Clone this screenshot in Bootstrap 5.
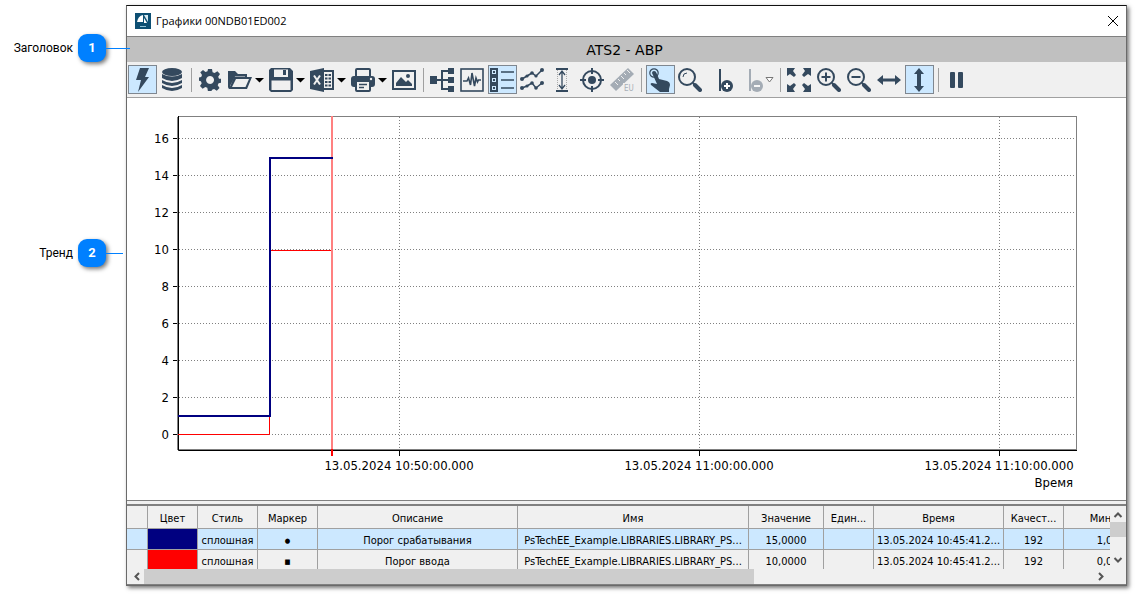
<!DOCTYPE html>
<html lang="ru">
<head>
<meta charset="utf-8">
<meta name="viewport" content="width=device-width, initial-scale=1">
<title>Графики 00NDB01ED002</title>
<link href="https://cdn.jsdelivr.net/npm/bootstrap@5.3.0/dist/css/bootstrap.min.css" rel="stylesheet">
<style>
body { font-family: "DejaVu Sans Condensed", "DejaVu Sans", sans-serif; font-size: 11px; line-height: 16px; color: #000; }
/* callouts */
.callouts { width: 130px; padding-top: 34px; z-index: 2; font-family: Roboto, sans-serif; font-size: 12px; }
.callout-label { width: 73px; }
.callout-num { width: 28px; height: 28px; margin-left: 5px; border-radius: 9px; background: #0080ff; box-shadow: 2px 2px 4px #777; font-size: 13px; }
.callout-line { height: 1px; width: 24px; background: #0080ff; }
.callout-line.short-line { width: 17px; }
.callout-second { margin-top: 177px; }
/* window */
.page-pad { padding: 5px 8px 9px 0; min-width: 0; }
.trend-window { margin-left: -4px; border: 1px solid #6a6a6a; border-top-color: #111; box-shadow: 2px 2px 4px #777; }
.title-bar { height: 31px; padding: 0 7px 0 8px; border-bottom: 1px solid #808080; font-family: "Open Sans", "Noto Sans", sans-serif; font-size: 11px; gap: 5px; }
.close-btn { width: 12px; height: 16px; }
.caption-bar { height: 25px; padding-right: 4px; background: #c0c0c0; font-family: "DejaVu Sans", sans-serif; font-size: 14px; line-height: 26px; }
.tool-bar { height: 36px; background: #f0f0f0; border-bottom: 1px solid #a0a0a0; }
.tool-bar svg { display: block; fill: #34495e; }
.tool { width: 29px; height: 29px; margin-left: 1px; padding: 1px; border: 1px solid transparent; border-radius: 0; background: none; flex: none; }
.tool.active { background: #cce8ff; border-color: #7f8790; }
.tool:disabled { opacity: .4; }
.drop { width: 11px; height: 29px; padding: 0; border: 0; background: none; flex: none; }
.drop svg { fill: #000; }
.sep { width: 8px; height: 24px; padding-left: 4px; flex: none; }
.sep::before { content: ""; display: block; width: 1px; height: 24px; background: #a0a0a0; }
.ln { fill: none; stroke: #34495e; }
/* chart */
.chart { font-size: 13px; }
.grid-lines { stroke: #808080; stroke-dasharray: 1 2; }
/* table */
.splitter { height: 6px; background: #f0f0f0; border-top: 1px solid #808080; border-bottom: 2px solid #808080; }
.table-area { background: #f0f0f0; height: 63px; }
.tags { width: 1038px; table-layout: fixed; border-collapse: separate; border-spacing: 0; }
.tags th, .tags td { height: 21px; padding: 3px 0 0; border-right: 1px solid #a0a0a0; border-bottom: 1px solid #a0a0a0; font-weight: 400; text-align: center; white-space: nowrap; overflow: hidden; line-height: 16px; }
.tags th { height: 23px; }
.tags .picked td { background: #cce8ff; }
.tags td.navy-cell { background: #000080; }
.tags td.red-cell { background: #f00; }
.tags td.marker-cell { font-size: 7px; }
.scroll-v { width: 16px; }
.scroll-h { height: 16px; background: #f0f0f0; padding-right: 17px; border-bottom: 1px solid #808080; }
.scroll-btn { width: 16px; height: 16px; padding: 0; border: 0; background: none; flex: none; }
.scroll-btn svg { display: block; fill: none; stroke: #555; stroke-width: 2; }
.thumb-v { height: 15px; background: #cdcdcd; }
.thumb-h { background: #cdcdcd; margin-left: 1px; }
</style>
</head>
<body class="bg-white">
<div class="d-flex align-items-start">
  <aside class="callouts flex-shrink-0 position-relative">
    <div class="d-flex align-items-center">
      <span class="callout-label text-end">Заголовок</span>
      <span class="callout-num d-flex align-items-center justify-content-center text-white fw-bold">1</span>
      <span class="callout-line"></span>
    </div>
    <div class="callout-second d-flex align-items-center">
      <span class="callout-label text-end">Тренд</span>
      <span class="callout-num d-flex align-items-center justify-content-center text-white fw-bold">2</span>
      <span class="callout-line short-line"></span>
    </div>
  </aside>

  <div class="page-pad flex-grow-1">
  <main class="trend-window bg-white">
    <header class="title-bar d-flex align-items-center">
      <svg width="16" height="16" viewBox="0 0 16 16"><rect width="16" height="16" fill="#0d4f73"/><path d="M2 9Q3 3 8 2V9Z" fill="#fff"/><path d="M9 2h4v8H9z" fill="#d8eaf2"/><path d="M9 2l4 7v1H9z" fill="#0d4f73"/><path d="M9 5l3 5H9z" fill="#fff"/><path d="M5 13h6v1H5z" fill="#8fc3d8"/></svg>
      <span>Графики 00NDB01ED002</span>
      <button class="close-btn btn p-0 border-0 ms-auto d-flex align-items-center" aria-label="Закрыть"><svg width="12" height="12" viewBox="0 0 12 12"><path d="M1 1l10 10M11 1L1 11" stroke="#000"/></svg></button>
    </header>
    <div class="caption-bar text-center">ATS2 - АВР</div>

    <div class="tool-bar d-flex align-items-center overflow-hidden" role="toolbar">
      <button class="tool active" aria-label="Онлайн"><svg width="24" height="24" viewBox="0 0 24 24"><path d="M10 0h9l-4 9h4L8 24l3-12H6z"/></svg></button>
      <button class="tool" aria-label="История"><svg width="24" height="24" viewBox="0 0 24 24"><ellipse cx="12" cy="4" rx="10" ry="4"/><path d="M2 6q10 5 20 0v4q-10 6-20 0zM2 12q10 6 20 0v3q-10 6-20 0zM2 17q10 6 20 0v3q-10 6-20 0z"/></svg></button>
      <span class="sep"></span>
      <button class="tool" aria-label="Настройки"><svg width="24" height="24" viewBox="0 0 24 24"><path fill-rule="evenodd" d="M10 1h4l.6 3.200 2 .9L19.400 3.300l2.600 2.700-1.800 2.800.8 2H23v4l-2.400.4-.9 2 1.800 2.800-2.700 2.700-2.700-1.800-2 .8L13.500 23h-3.600l-.6-3.300-2-.8-2.700 1.800L2 18l1.700-2.800-.8-2L1 12.800V9.500l2.200-.6.8-2L2.300 4.200 5 2l2.500 2 2-.8zM12 8a4 4 0 1 0 .1 0z"/></svg></button>
      <button class="tool" aria-label="Открыть"><svg width="24" height="24" viewBox="0 0 24 24"><path d="M0 3h7l3 3h9v4h-2V8.500H7L2 18l2 3H2q-2 0-2-2z"/><path fill-rule="evenodd" d="M6 9h18l-5 12H1zM8 11l-4 8h13.500l3.500-8z"/></svg></button>
      <button class="drop" aria-label="Открыть: варианты"><svg width="11" height="6" viewBox="0 0 11 6"><path d="M0 1h9L4.500 5.500z"/></svg></button>
      <button class="tool" aria-label="Сохранить"><svg width="24" height="24" viewBox="0 0 24 24"><path fill-rule="evenodd" d="M2 0h19l3 3v19l-2 2H2l-2-2V2zM5 1.500V9h14V1.500zM2.500 12.500v9.500h19v-9.500z"/><path d="M14 2h3v5h-3z"/></svg></button>
      <button class="drop" aria-label="Сохранить: варианты"><svg width="11" height="6" viewBox="0 0 11 6"><path d="M0 1h9L4.500 5.500z"/></svg></button>
      <button class="tool" aria-label="Экспорт в Excel"><svg width="24" height="24" viewBox="0 0 24 24"><path d="M0 3l14-3v24L0 21z"/><path d="M4 7.500l6 9M10 7.500l-6 9" stroke="#f0f0f0" stroke-width="2"/><path class="ln" d="M14 3h9v18h-9" stroke-width="2"/><path class="ln" d="M15 7h6M15 10.500h6M15 14h6M15 17.500h6" stroke-width="2" stroke-dasharray="2.500 1"/></svg></button>
      <button class="drop" aria-label="Экспорт: варианты"><svg width="11" height="6" viewBox="0 0 11 6"><path d="M0 1h9L4.500 5.500z"/></svg></button>
      <button class="tool" aria-label="Печать"><svg width="24" height="24" viewBox="0 0 24 24"><rect class="ln" x="5" y="1" width="14" height="9" rx="1" stroke-width="2"/><rect y="8" width="24" height="11" rx="3"/><rect x="5" y="13" width="14" height="10" rx="1" fill="#f0f0f0" stroke="#34495e" stroke-width="2"/><path class="ln" d="M8 16.500h8M8 19.500h5" stroke-width="1.500"/><circle cx="20" cy="11" r="1.200" fill="#f0f0f0"/></svg></button>
      <button class="drop" aria-label="Печать: варианты"><svg width="11" height="6" viewBox="0 0 11 6"><path d="M0 1h9L4.500 5.500z"/></svg></button>
      <button class="tool" aria-label="Изображение"><svg width="24" height="24" viewBox="0 0 24 24"><rect x="1" y="3" width="22" height="18" fill="none" stroke="#34495e" stroke-width="2"/><path d="M4 18v-3l5-6 5 5 2-2 4 4v2z"/><circle cx="16" cy="8" r="2"/></svg></button>
      <span class="sep"></span>
      <button class="tool" aria-label="Дерево"><svg width="24" height="24" viewBox="0 0 24 24"><path d="M0 8h7v8H0zM18 0h6v6h-6zM18 9h6v6h-6zM18 18h6v6h-6z"/><path class="ln" d="M6 12h12M18 3h-6v18h6" stroke-width="2"/></svg></button>
      <button class="tool" aria-label="Тренд"><svg width="24" height="24" viewBox="0 0 24 24"><rect class="ln" x="1" y="1" width="22" height="22" stroke-width="1.600"/><path class="ln" d="M3 13h4l1.500-3 2 7L12 5l2.500 13L16 10l1.500 4 1-2H21" stroke-width="1.600"/></svg></button>
      <button class="tool active" aria-label="Легенда"><svg width="24" height="24" viewBox="0 0 24 24"><path class="ln" d="M1 1h6v6H1zM1 9h6v6H1zM1 17h6v6H1z" stroke-width="2"/><path d="M3 3h2v2H3zM3 11h2v2H3zM3 19h2v2H3z"/><path class="ln" d="M11 4h13M11 12h13M11 20h13" stroke-width="1.500"/></svg></button>
      <button class="tool" aria-label="Графики"><svg width="24" height="24" viewBox="0 0 24 24"><path class="ln" d="M2 11l5-3 5-3 4 3 6-6M2 20l5-2 5-3 4 5 6-5" stroke-width="1.500"/><circle cx="2" cy="11" r="2"/><circle cx="7" cy="8" r="1.600"/><circle cx="12" cy="5" r="1.800"/><circle cx="16" cy="8" r="1.600"/><circle cx="22" cy="2" r="2"/><circle cx="2" cy="20" r="2"/><circle cx="7" cy="18" r="1.600"/><circle cx="12" cy="15" r="1.800"/><circle cx="16" cy="20" r="1.800"/><circle cx="22" cy="15" r="2"/></svg></button>
      <button class="tool" aria-label="Измерение по высоте"><svg width="24" height="24" viewBox="0 0 24 24"><path class="ln" d="M6 1h12M6 23h12" stroke-width="2"/><path d="M7.500 2v20M16.500 2v20" stroke="#aaa" stroke-dasharray="1 1"/><path class="ln" d="M12 4v16M9 7l3-4 3 4M9 17l3 4 3-4" stroke-width="1.300"/></svg></button>
      <button class="tool" aria-label="Центрировать"><svg width="24" height="24" viewBox="0 0 24 24"><circle class="ln" cx="12" cy="12" r="9" stroke-width="2"/><circle cx="12" cy="12" r="4"/><path class="ln" d="M12 0v6M12 18v6M0 12h6M18 12h6" stroke-width="2"/></svg></button>
      <button class="tool" aria-label="Единицы" disabled><svg width="24" height="24" viewBox="0 0 24 24"><path d="M0 17L18 0l6 6L6 23z"/><path d="M5 14l3 3M8 11l2 2M11 8l3 3M14 5l2 2M17 2l3 3" stroke="#f0f0f0"/><path d="M13 15h11v9H13z" fill="#f0f0f0"/><text x="14" y="23" font-size="8">EU</text></svg></button>
      <span class="sep"></span>
      <button class="tool active" aria-label="Выбор"><svg width="24" height="24" viewBox="0 0 24 24"><circle class="ln" cx="6" cy="5" r="4.200" stroke-width="1.200"/><path d="M4 5q0-2 2-2t2.500 2L11 11l8 2q3 1 3 4l-1 4v3h-9l-9-7q-1-2 1-2l5 1z"/></svg></button>
      <button class="tool" aria-label="Лупа"><svg width="24" height="24" viewBox="0 0 24 24"><circle class="ln" cx="9" cy="9" r="8" stroke-width="2"/><path class="ln" d="M5 9q0-4 4-4" stroke-width="1"/><path class="ln" d="M15 15l2 2" stroke-width="2"/><path class="ln" d="M17 17l5 5" stroke-width="4" stroke-linecap="round"/></svg></button>
      <button class="tool" aria-label="Добавить курсор"><svg width="24" height="24" viewBox="0 0 24 24" overflow="visible"><path d="M11 1h2v22h-2z"/><circle cx="19" cy="18" r="6"/><path d="M16 18h6M19 15v6" stroke="#fff" stroke-width="2"/></svg></button>
      <button class="tool" aria-label="Удалить курсор" disabled><svg width="24" height="24" viewBox="0 0 24 24" overflow="visible"><path d="M11 1h2v22h-2z"/><circle cx="19" cy="18" r="6"/><path d="M16 18h6" stroke="#fff" stroke-width="2"/></svg></button>
      <button class="drop" aria-label="Удалить: варианты"><svg width="11" height="6" viewBox="0 0 11 6"><path d="M1 .5h7L4.500 5z" fill="#fff" stroke="#777"/></svg></button>
      <span class="sep"></span>
      <button class="tool" aria-label="Показать всё"><svg width="24" height="24" viewBox="0 0 24 24"><path d="M0 0h8L6 3l3 4-2 2-4-3-3 2zM24 0v8l-3-2-4 3-2-2 3-4-2-3zM0 24v-8l3 2 4-3 2 2-3 4 2 3zM24 24h-8l2-3-3-4 2-2 4 3 3-2z"/></svg></button>
      <button class="tool" aria-label="Увеличить"><svg width="24" height="24" viewBox="0 0 24 24"><circle class="ln" cx="9" cy="9" r="8" stroke-width="2"/><path class="ln" d="M9 4.500v9M4.500 9h9" stroke-width="2"/><path class="ln" d="M15 15l2 2" stroke-width="2"/><path class="ln" d="M17 17l5 5" stroke-width="4" stroke-linecap="round"/></svg></button>
      <button class="tool" aria-label="Уменьшить"><svg width="24" height="24" viewBox="0 0 24 24"><circle class="ln" cx="9" cy="9" r="8" stroke-width="2"/><path class="ln" d="M4.500 9h9" stroke-width="2"/><path class="ln" d="M15 15l2 2" stroke-width="2"/><path class="ln" d="M17 17l5 5" stroke-width="4" stroke-linecap="round"/></svg></button>
      <button class="tool" aria-label="По ширине"><svg width="24" height="24" viewBox="0 0 24 24"><path d="M0 12l6-5v3.500h12V7l6 5-6 5v-3.500H6V17z"/></svg></button>
      <button class="tool active" aria-label="По высоте"><svg width="24" height="24" viewBox="0 0 24 24"><path d="M12 0l5 6h-3v12h3l-5 6-5-6h3V6H7z"/></svg></button>
      <span class="sep"></span>
      <button class="tool" aria-label="Пауза"><svg width="24" height="24" viewBox="0 0 24 24"><rect x="5" y="4" width="5" height="16" rx="1"/><rect x="13" y="4" width="5" height="16" rx="1"/></svg></button>
    </div>

    <svg class="chart d-block w-100" viewBox="0 0 999 402" role="img" aria-label="Тренд">
      <rect x="51.500" y="18.500" width="898" height="333" fill="none" stroke="#808080"/>
      <g class="grid-lines">
        <path d="M52 40.500h897M52 77.500h897M52 114.500h897M52 151.500h897M52 188.500h897M52 225.500h897M52 262.500h897M52 299.500h897M52 336.500h897"/>
        <path d="M272.500 19v332M572.500 19v332M872.500 19v332"/>
      </g>
      <path d="M51.500 18v334.500H950M46 40.500h5M46 77.500h5M46 114.500h5M46 151.500h5M46 188.500h5M46 225.500h5M46 262.500h5M46 299.500h5M46 336.500h5M272.500 353v5M572.500 353v5M872.500 353v5" fill="none" stroke="#000"/>
      <path d="M50 19h1v333h-1z" fill="#808080"/>
      <path d="M51 336.500h91.500V318M143 152.500h62" fill="none" stroke="#f00"/>
      <path d="M205 18v333" stroke="#ff8080" stroke-width="2"/>
      <path d="M205 351v7" stroke="#f00" stroke-width="2"/>
      <path d="M51 318h92V60h63" fill="none" stroke="#000080" stroke-width="2"/>
      <g text-anchor="end">
        <text x="42" y="45">16</text><text x="42" y="82">14</text><text x="42" y="119">12</text><text x="42" y="156">10</text><text x="42" y="193">8</text><text x="42" y="230">6</text><text x="42" y="267">4</text><text x="42" y="304">2</text><text x="42" y="341">0</text>
        <text x="946" y="389">Время</text>
      </g>
      <g text-anchor="middle"><text x="272" y="372">13.05.2024 10:50:00.000</text><text x="572" y="372">13.05.2024 11:00:00.000</text><text x="872" y="372">13.05.2024 11:10:00.000</text></g>
    </svg>

    <div class="splitter"></div>
    <div class="table-area d-flex">
      <div class="flex-grow-1 overflow-hidden">
        <table class="tags">
          <colgroup><col style="width:21px"><col style="width:50px"><col style="width:60px"><col style="width:60px"><col style="width:200px"><col style="width:231px"><col style="width:75px"><col style="width:50px"><col style="width:130px"><col style="width:60px"><col style="width:101px"></colgroup>
          <thead><tr><th></th><th>Цвет</th><th>Стиль</th><th>Маркер</th><th>Описание</th><th>Имя</th><th>Значение</th><th>Един...</th><th>Время</th><th>Качест...</th><th>Минимум</th></tr></thead>
          <tbody>
            <tr class="picked"><td></td><td class="navy-cell"></td><td>сплошная</td><td class="marker-cell">●</td><td>Порог срабатывания</td><td>PsTechEE_Example.LIBRARIES.LIBRARY_PS...</td><td>15,0000</td><td></td><td>13.05.2024 10:45:41.2...</td><td>192</td><td>1,0000</td></tr>
            <tr><td></td><td class="red-cell"></td><td>сплошная</td><td class="marker-cell">■</td><td>Порог ввода</td><td>PsTechEE_Example.LIBRARIES.LIBRARY_PS...</td><td>10,0000</td><td></td><td>13.05.2024 10:45:41.2...</td><td>192</td><td>0,0000</td></tr>
          </tbody>
        </table>
      </div>
      <div class="scroll-v d-flex flex-column flex-shrink-0">
        <button class="scroll-btn" aria-label="Вверх"><svg width="16" height="16" viewBox="0 0 16 16"><path d="M4.500 11L8 7.500l3.500 3.500"/></svg></button>
        <div class="thumb-v"></div>
        <button class="scroll-btn mt-auto" aria-label="Вниз"><svg width="16" height="16" viewBox="0 0 16 16"><path d="M4.500 5L8 8.500 11.500 5"/></svg></button>
      </div>
    </div>
    <div class="scroll-h d-flex">
      <button class="scroll-btn" aria-label="Влево"><svg width="16" height="16" viewBox="0 0 16 16"><path d="M12 4L8.500 7.500 12 11"/></svg></button>
      <div class="flex-grow-1 d-flex"><div class="thumb-h" style="width:64.2%"></div></div>
      <button class="scroll-btn" aria-label="Вправо"><svg width="16" height="16" viewBox="0 0 16 16"><path d="M6 4l3.500 3.500L6 11"/></svg></button>
    </div>
  </main>
  </div>
</div>
<script src="https://cdn.jsdelivr.net/npm/bootstrap@5.3.0/dist/js/bootstrap.bundle.min.js"></script>
</body>
</html>
